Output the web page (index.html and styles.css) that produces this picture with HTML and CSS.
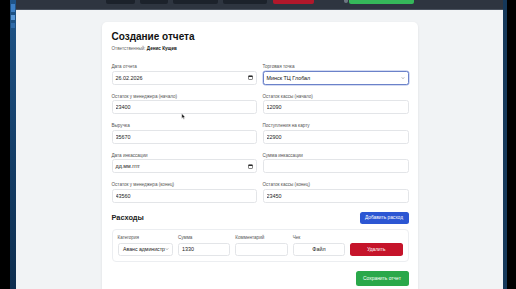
FILE: index.html
```html
<!DOCTYPE html>
<html lang="ru">
<head>
<meta charset="utf-8">
<link rel="stylesheet" href="styles.css">
</head>
<body>
<div class="screen">
  <div class="bezel-left"></div>
  <div class="strip-left"><span class="sl a"></span><span class="sl b"></span><span class="sl c"></span></div>
  <div class="window">
    <div class="topbar">
      <span class="tb dark w29 first"></span>
      <span class="tb dark w28"></span>
      <span class="tb dark w45"></span>
      <span class="tb dark w44"></span>
      <span class="tb red"></span>
      <span class="tb tiny"></span>
      <span class="tb green"></span>
    </div>
    <div class="page">
      <div class="card">
        <h1 class="title">Создание отчета</h1>
        <div class="owner">Ответственный: <b>Денис Кущев</b></div>
        <div class="form-grid">
          <div class="field">
            <label class="lbl">Дата отчета</label>
            <div class="ctrl"><span>26.02.2026</span>
              <svg class="cal" viewBox="0 0 10 10"><rect x="1" y="1.5" width="8" height="7.5" rx="1.2" fill="none" stroke="#222" stroke-width="1.1"/><rect x="1" y="1.5" width="8" height="2.4" fill="#222"/></svg>
            </div>
          </div>
          <div class="field">
            <label class="lbl">Торговая точка</label>
            <div class="ctrl focus"><span class="sel-text">Минск ТЦ Глобал</span>
              <svg class="chev" viewBox="0 0 10 10"><path d="M2 3.5 L5 6.5 L8 3.5" fill="none" stroke="#555" stroke-width="1.2"/></svg>
            </div>
          </div>
          <div class="field">
            <label class="lbl">Остаток у менеджера (начало)</label>
            <input class="ctrl" type="text" value="23400">
          </div>
          <div class="field">
            <label class="lbl">Остаток кассы (начало)</label>
            <input class="ctrl" type="text" value="12090">
          </div>
          <div class="field">
            <label class="lbl">Выручка</label>
            <input class="ctrl" type="text" value="35670">
          </div>
          <div class="field">
            <label class="lbl">Поступления на карту</label>
            <input class="ctrl" type="text" value="22900">
          </div>
          <div class="field">
            <label class="lbl">Дата инкассации</label>
            <div class="ctrl"><span>дд.мм.гггг</span>
              <svg class="cal" viewBox="0 0 10 10"><rect x="1" y="1.5" width="8" height="7.5" rx="1.2" fill="none" stroke="#222" stroke-width="1.1"/><rect x="1" y="1.5" width="8" height="2.4" fill="#222"/></svg>
            </div>
          </div>
          <div class="field">
            <label class="lbl">Сумма инкассации</label>
            <input class="ctrl" type="text" value="">
          </div>
          <div class="field">
            <label class="lbl">Остаток у менеджера (конец)</label>
            <input class="ctrl" type="text" value="43560">
          </div>
          <div class="field">
            <label class="lbl">Остаток кассы (конец)</label>
            <input class="ctrl" type="text" value="23450">
          </div>
        </div>

        <div class="exp-head">
          <h2 class="exp-title">Расходы</h2>
          <button class="btn blue">Добавить расход</button>
        </div>

        <div class="exp-box">
          <div class="efield">
            <label class="lbl">Категория</label>
            <div class="ctrl small"><span class="clip">Аванс администр</span>
              <svg class="chev" viewBox="0 0 10 10"><path d="M2 3.5 L5 6.5 L8 3.5" fill="none" stroke="#555" stroke-width="1.2"/></svg>
            </div>
          </div>
          <div class="efield">
            <label class="lbl">Сумма</label>
            <input class="ctrl small" type="text" value="1330">
          </div>
          <div class="efield">
            <label class="lbl">Комментарий</label>
            <input class="ctrl small" type="text" value="">
          </div>
          <div class="efield">
            <label class="lbl">Чек</label>
            <div class="ctrl small file">Файл</div>
          </div>
          <div class="efield">
            <button class="btn red">Удалить</button>
          </div>
        </div>

        <div class="save-row">
          <button class="btn green">Сохранить отчет</button>
        </div>
      </div>
      <svg class="cursor" viewBox="0 0 8 12"><path d="M1 1 L1 9.5 L3 7.6 L4.4 10.8 L5.6 10.3 L4.3 7.2 L7 7.2 Z" fill="#111" stroke="#fff" stroke-width="0.8"/></svg>
    </div>
  </div>
  <div class="strip-right"></div>
  <div class="bezel-right"></div>
</div>
</body>
</html>
```
FILE: styles.css
```css
* { box-sizing: border-box; }
html, body { margin: 0; padding: 0; background: #000; }
body { font-family: "Liberation Sans", Arial, sans-serif; color: #1d1d1f; }

.screen { display: flex; width: 516px; height: 289px; overflow: hidden; background: #000; }
.bezel-left { width: 10px; background: #000; }
.strip-left {
  width: 6px; display: flex; flex-direction: column; gap: 3px; padding-top: 4px;
  background: linear-gradient(#1f5488, #123a63 60%, #0d2d4e);
}
.sl { display: block; width: 4px; height: 8px; background: #3d7fc4; margin-left: 1px; }
.sl.b { height: 5px; background: #5a97d6; }
.sl.c { height: 5px; background: #2f6aa8; }

.window { width: 487px; display: flex; flex-direction: column; }
.topbar {
  height: 10px; background: #2e3540; display: flex; align-items: flex-start;
  padding-left: 90px; gap: 5px; border-bottom: 1px solid #4a525e;
}
.tb { display: block; height: 4px; border-radius: 0 0 2px 2px; }
.tb.dark { background: #1c222b; }
.w29 { width: 29px; } .w28 { width: 28px; } .w45 { width: 45px; } .w44 { width: 44px; }
.tb.red { width: 41px; height: 4px; background: #b1182b; margin-left: 1px; }
.tb.tiny { width: 4px; height: 3px; background: #6d7682; margin-left: 25px; }
.tb.green { width: 65px; height: 3.5px; background: #35b85a; margin-left: -4px; }

.page { flex: 1; background: #f1f3f5; padding-top: 12px; position: relative; overflow: hidden; }
.card {
  width: 316px; margin: 0 auto; background: #fff; border-radius: 5px;
  box-shadow: 0 1px 3px rgba(0,0,0,0.08); padding: 8px 9px 12px 10px;
}
.title { margin: 0; font-size: 10px; line-height: 13px; font-weight: 700; color: #111; }
.owner { margin-top: 3px; font-size: 4.6px; line-height: 6px; color: #666; }
.owner b { color: #111; }

.form-grid {
  display: grid; grid-template-columns: 145px 146px; column-gap: 6px; row-gap: 9px;
  margin-top: 12px;
}
.field { display: flex; flex-direction: column; }
.lbl { display: block; font-size: 4.6px; line-height: 6.5px; color: #555; }
.ctrl {
  display: flex; align-items: center; justify-content: space-between;
  height: 14px; width: 100%; border: 0.8px solid #e3e5e8; border-radius: 2.5px;
  background: #fff; padding: 0 3px; font-family: inherit; font-size: 5.4px; color: #222;
  outline: none;
}
.ctrl.focus { border: 1px solid #6b82c9; box-shadow: 0 0 0 0.5px #aab8e6; }
.sel-text { color: #111; }
.cal { width: 5px; height: 5px; }
.chev { width: 4px; height: 4px; flex: none; }

.exp-head { display: flex; justify-content: space-between; align-items: center; margin-top: 9px; height: 12px; }
.exp-title { margin: 0; font-size: 7.4px; font-weight: 700; color: #222; }
.btn {
  border: none; border-radius: 2.5px; color: #fff; font-family: inherit;
  font-size: 4.8px; padding: 0; cursor: pointer;
}
.btn.blue { background: #2c56d3; width: 49px; height: 12px; }
.exp-box {
  margin-top: 5px; border: 1px solid #eceef1; border-radius: 4px;
  padding: 5px 5px 5px 5px; display: grid; grid-template-columns: repeat(5, 1fr);
  column-gap: 5px; align-items: end;
}
.efield { display: flex; flex-direction: column; }
.efield .lbl { line-height: 6px; margin-bottom: 2px; }
.ctrl.small { height: 13px; }
.clip { white-space: nowrap; padding-left: 1.5px; font-size: 5.2px; }
.file { justify-content: center; }
.btn.red { background: #c5142a; height: 13px; width: 100%; }

.save-row { display: flex; justify-content: flex-end; margin-top: 9.5px; }
.btn.green { background: #2aa84a; width: 53px; height: 15px; font-size: 4.9px; }

.strip-right { width: 4px; background: #15385a; }
.bezel-right { flex: 1; background: #000; }

.cursor { position: absolute; left: 165px; top: 103px; width: 5px; height: 7px; }
```
